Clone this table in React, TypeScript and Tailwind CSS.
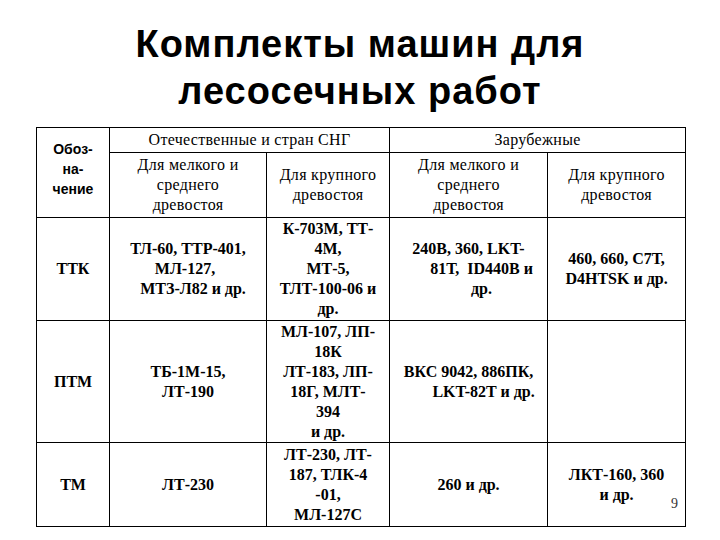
import React from "react";

type Line = { t: string; cls?: string };

const serif = "font-['Liberation_Serif','Times_New_Roman',serif]";

function Cell({ lines, bold = true }: { lines: Line[]; bold?: boolean }) {
  return (
    <div className={`flex flex-col items-center text-[16px] leading-[20px] ${bold ? "font-bold" : "font-normal tracking-[0.3px]"}`}>
      {lines.map((l, i) => (
        <span key={i} className={`whitespace-pre ${l.cls ?? ""}`}>
          {l.t}
        </span>
      ))}
    </div>
  );
}

const L = (...a: (string | Line)[]): Line[] => a.map((x) => (typeof x === "string" ? { t: x } : x));

export default function App() {
  const td = "border border-black align-middle p-0 text-center";
  return (
    <div className="relative w-[720px] h-[540px] bg-white text-black overflow-hidden">
      <div className="pt-[21px] flex flex-col items-center font-['Liberation_Sans',Arial,sans-serif] font-bold text-[38px] leading-[47px] tracking-[1px]">
        <div>Комплекты машин для</div>
        <div>лесосечных работ</div>
      </div>
      <div className="mt-[12px] ml-[36px] relative w-[649px]">
        <table className={`table-fixed border-collapse w-[649px] ${serif}`}>
          <colgroup>
            <col className="w-[73px]" />
            <col className="w-[157px]" />
            <col className="w-[123px]" />
            <col className="w-[158px]" />
            <col className="w-[138px]" />
          </colgroup>
          <tbody>
            <tr className="h-[25px]">
              <td rowSpan={2} className={td}>
                <div className="flex flex-col items-center font-['Liberation_Sans',Arial,sans-serif] font-bold text-[14px] leading-[20px] pb-[7px]">
                  <span>Обоз-</span>
                  <span>на-</span>
                  <span>чение</span>
                </div>
              </td>
              <td colSpan={2} className={td}>
                <Cell bold={false} lines={L("Отечественные и стран СНГ")} />
              </td>
              <td colSpan={2} className={td}>
                <Cell bold={false} lines={L("Зарубежные")} />
              </td>
            </tr>
            <tr className="h-[65px]">
              <td className={td}>
                <Cell bold={false} lines={L("Для мелкого и", "среднего", "древостоя")} />
              </td>
              <td className={td}>
                <Cell bold={false} lines={L("Для крупного", "древостоя")} />
              </td>
              <td className={td}>
                <Cell bold={false} lines={L("Для мелкого и", "среднего", "древостоя")} />
              </td>
              <td className={td}>
                <Cell bold={false} lines={L("Для крупного", "древостоя")} />
              </td>
            </tr>
            <tr className="h-[103px]">
              <td className={td}>
                <Cell lines={L("ТТК")} />
              </td>
              <td className={td}>
                <Cell lines={L("ТЛ-60, ТТР-401,", { t: "МЛ-127,", cls: "pr-[6px]" }, { t: "МТЗ-Л82 и др.", cls: "pl-[10px]" })} />
              </td>
              <td className={td}>
                <Cell lines={L("К-703М, ТТ-", "4М,", "МТ-5,", "ТЛТ-100-06 и", "др.")} />
              </td>
              <td className={td}>
                <Cell lines={L("240В, 360, LKT-", { t: "81Т,  ID440В и", cls: "pl-[26px]" }, { t: "др.", cls: "pl-[26px]" })} />
              </td>
              <td className={td}>
                <Cell lines={L("460, 660, С7Т,", "D4HTSK и др.")} />
              </td>
            </tr>
            <tr className="h-[122px]">
              <td className={td}>
                <Cell lines={L("ПТМ")} />
              </td>
              <td className={td}>
                <Cell lines={L("ТБ-1М-15,", "ЛТ-190")} />
              </td>
              <td className={td}>
                <Cell lines={L("МЛ-107, ЛП-", "18К", "ЛТ-183, ЛП-", "18Г, МЛТ-", "394", "и др.")} />
              </td>
              <td className={td}>
                <Cell lines={L("ВКС 9042, 886ПК,", { t: "LKT-82T и др.", cls: "pl-[30px]" })} />
              </td>
              <td className={td}></td>
            </tr>
            <tr className="h-[84px]">
              <td className={td}>
                <Cell lines={L("ТМ")} />
              </td>
              <td className={td}>
                <Cell lines={L("ЛТ-230")} />
              </td>
              <td className={td}>
                <Cell lines={L("ЛТ-230, ЛТ-", "187, ТЛК-4", "-01,", "МЛ-127С")} />
              </td>
              <td className={td}>
                <Cell lines={L("260 и др.")} />
              </td>
              <td className={td}>
                <Cell lines={L("ЛКТ-160, 360", "и др.")} />
              </td>
            </tr>
          </tbody>
        </table>
        <span className={`absolute right-[7px] bottom-[16px] text-[14px] leading-none text-[#333] ${serif}`}>9</span>
      </div>
    </div>
  );
}
